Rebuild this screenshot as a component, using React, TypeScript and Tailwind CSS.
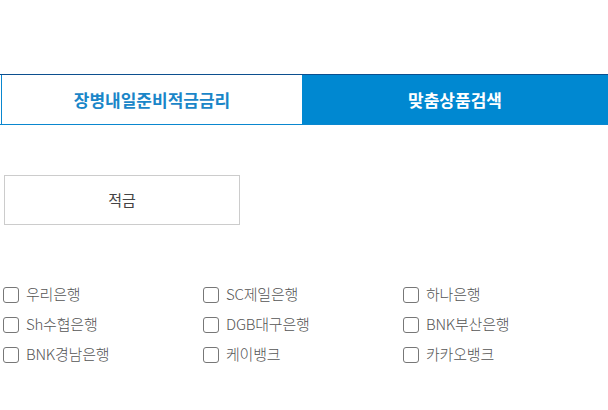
const banks = [
  "우리은행", "SC제일은행", "하나은행",
  "Sh수협은행", "DGB대구은행", "BNK부산은행",
  "BNK경남은행", "케이뱅크", "카카오뱅크",
]

export default function App() {
  return (
    <div
      className="w-[608px] h-[410px] bg-white overflow-hidden"
      style={{ fontFamily: '"Noto Sans CJK KR", "Noto Sans", sans-serif' }}
    >
      {/* 탭 */}
      <div className="mt-[74px] flex h-[51px] border-t border-t-[#0c4f8f] border-b border-b-[#0a87cf]">
        <div className="w-[301px] ml-px border-l border-l-[#0a87cf] flex items-center justify-center text-[17px] font-bold text-[#1a86c8]">
          장병내일준비적금금리
        </div>
        <div className="flex-1 bg-[#0088d1] flex items-center justify-center text-[17px] font-bold text-white">
          맞춤상품검색
        </div>
      </div>

      {/* 상품 유형 */}
      <div className="mt-[50px] ml-[4px] w-[236px] h-[50px] border border-[#cccccc] flex items-center justify-center text-[15px] text-[#444]">
        적금
      </div>

      {/* 은행 선택 */}
      <div className="mt-[61px] ml-[3px] grid grid-cols-3 w-[600px] gap-y-[13px]">
        {banks.map((b) => (
          <label key={b} className="flex items-center h-[17px] gap-[7px] text-[15px] font-light text-[#555] tracking-[-0.2px]">
            <span className="w-[16px] h-[16px] border border-[#777] rounded-[3px] bg-white shrink-0" />
            {b}
          </label>
        ))}
      </div>
    </div>
  )
}
